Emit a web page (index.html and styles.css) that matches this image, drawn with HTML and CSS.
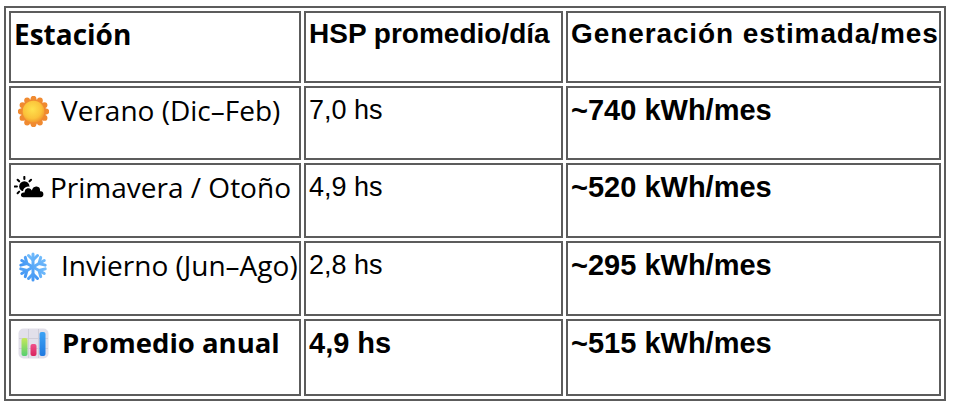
FILE: index.html
```html
<!DOCTYPE html>
<html lang="es">
<head>
<meta charset="utf-8">
<title>Generación solar por estación</title>
<link rel="stylesheet" href="styles.css">
</head>
<body>
<table class="tbl">
  <colgroup>
    <col class="c1"><col class="c2"><col class="c3">
  </colgroup>
  <tr class="r-head">
    <th class="cell lbl">Estación</th>
    <th class="cell">HSP promedio/día</th>
    <th class="cell wide">Generación estimada/mes</th>
  </tr>
  <tr class="r1">
    <td class="cell lbl"><span class="ico ico-sun"><svg viewBox="0 0 32 32" width="31" height="31" aria-hidden="true">
      <defs><radialGradient id="sg" cx="45%" cy="40%" r="60%"><stop offset="0" stop-color="#ffe14d"/><stop offset="0.7" stop-color="#fbc23a"/><stop offset="1" stop-color="#f29a2e"/></radialGradient></defs>
      <g fill="#f08a30">
        <circle cx="16" cy="2.8" r="3"/><circle cx="22.6" cy="4.6" r="3"/><circle cx="27.4" cy="9.4" r="3"/><circle cx="29.2" cy="16" r="3"/><circle cx="27.4" cy="22.6" r="3"/><circle cx="22.6" cy="27.4" r="3"/><circle cx="16" cy="29.2" r="3"/><circle cx="9.4" cy="27.4" r="3"/><circle cx="4.6" cy="22.6" r="3"/><circle cx="2.8" cy="16" r="3"/><circle cx="4.6" cy="9.4" r="3"/><circle cx="9.4" cy="4.6" r="3"/>
        <circle cx="16" cy="16" r="13"/>
      </g>
      <circle cx="16" cy="16" r="11.2" fill="url(#sg)"/>
    </svg></span>Verano (Dic–Feb)</td>
    <td class="cell">7,0 hs</td>
    <td class="cell strong">~740 kWh/mes</td>
  </tr>
  <tr class="r2">
    <td class="cell lbl"><span class="ico ico-cloud"><svg viewBox="0 0 30 22" width="31" height="23" aria-hidden="true">
      <g stroke="#000" stroke-width="2" stroke-linecap="round">
        <line x1="10" y1="0.8" x2="10" y2="2.8"/><line x1="3.5" y1="3.5" x2="5" y2="5"/><line x1="16.5" y1="3.5" x2="15" y2="5"/><line x1="0.8" y1="10" x2="2.8" y2="10"/><line x1="3.5" y1="16.5" x2="5" y2="15"/>
      </g>
      <circle cx="10" cy="10" r="5" fill="#000"/>
      <path d="M9 21.2 C4.8 21.2 4.8 14.8 9.5 15 C9.8 10.6 15 9.8 17 12.3 C18.5 7.6 26.2 8.2 26 13.8 C30.2 13.8 30.4 21.2 26 21.2 Z" fill="#000" stroke="#fff" stroke-width="1.6"/>
    </svg></span>Primavera / Otoño</td>
    <td class="cell">4,9 hs</td>
    <td class="cell strong">~520 kWh/mes</td>
  </tr>
  <tr class="r3">
    <td class="cell lbl"><span class="ico ico-snow"><svg viewBox="0 0 30 30" width="30" height="30" aria-hidden="true">
      <defs><linearGradient id="fg" gradientUnits="userSpaceOnUse" x1="0" y1="0" x2="30" y2="30"><stop offset="0" stop-color="#86ccff"/><stop offset="1" stop-color="#2f86f0"/></linearGradient></defs>
      <g stroke="url(#fg)" stroke-width="3" stroke-linecap="round" stroke-linejoin="round" fill="none">
        <g>
          <line x1="15" y1="2" x2="15" y2="28"/>
          <polyline points="10.5,3.5 15,8 19.5,3.5"/>
          <polyline points="10.5,26.5 15,22 19.5,26.5"/>
        </g>
        <g transform="rotate(60 15 15)">
          <line x1="15" y1="2" x2="15" y2="28"/>
          <polyline points="10.5,3.5 15,8 19.5,3.5"/>
          <polyline points="10.5,26.5 15,22 19.5,26.5"/>
        </g>
        <g transform="rotate(120 15 15)">
          <line x1="15" y1="2" x2="15" y2="28"/>
          <polyline points="10.5,3.5 15,8 19.5,3.5"/>
          <polyline points="10.5,26.5 15,22 19.5,26.5"/>
        </g>
      </g>
    </svg></span>Invierno (Jun–Ago)</td>
    <td class="cell">2,8 hs</td>
    <td class="cell strong">~295 kWh/mes</td>
  </tr>
  <tr class="r4">
    <td class="cell lbl strong-lbl"><span class="ico ico-chart"><svg viewBox="0 0 31 31" width="31" height="31" aria-hidden="true">
      <defs>
        <linearGradient id="gg" x1="0" y1="0" x2="0" y2="1"><stop offset="0" stop-color="#c6e85a"/><stop offset="1" stop-color="#56cf72"/></linearGradient>
        <linearGradient id="pg" x1="0" y1="0" x2="0" y2="1"><stop offset="0" stop-color="#f0508a"/><stop offset="1" stop-color="#d8245e"/></linearGradient>
        <linearGradient id="bg" x1="0" y1="0" x2="0" y2="1"><stop offset="0" stop-color="#3da3f5"/><stop offset="1" stop-color="#1f79e0"/></linearGradient>
      </defs>
      <rect x="0.5" y="0.5" width="30" height="30" rx="5" fill="#e2e0ea"/>
      <g stroke="#cfcdd8" stroke-width="1"><line x1="10.5" y1="1" x2="10.5" y2="30"/><line x1="20.5" y1="1" x2="20.5" y2="30"/><line x1="1" y1="10.5" x2="30" y2="10.5"/><line x1="1" y1="20.5" x2="30" y2="20.5"/></g>
      <rect x="3.5" y="10" width="6" height="18" rx="2" fill="url(#gg)"/>
      <rect x="12.5" y="16" width="6" height="12" rx="2" fill="url(#pg)"/>
      <rect x="21.5" y="4" width="6" height="24" rx="2" fill="url(#bg)"/>
    </svg></span>Promedio anual</td>
    <td class="cell strong">4,9 hs</td>
    <td class="cell strong">~515 kWh/mes</td>
  </tr>
</table>
</body>
</html>
```
FILE: styles.css
```css
html, body {
  margin: 0;
  padding: 0;
  background: #fff;
}
body {
  font-family: "Liberation Sans", Arial, sans-serif;
  color: #000;
}
.tbl {
  margin: 6px 0 0 4px;
  border: 2px solid #5c5c5c;
  border-spacing: 3px;
  table-layout: fixed;
  width: 942px;
}
.c1 { width: 292px; }
.c2 { width: 259px; }
.c3 { width: 375px; }
.cell {
  box-sizing: border-box;
  border: 2px solid #5c5c5c;
  vertical-align: top;
  text-align: left;
  padding: 6px 2px 0 3px;
  font-size: 27px;
  line-height: 32px;
  font-weight: normal;
  white-space: nowrap;
  overflow: hidden;
}
th.cell {
  font-weight: bold;
  font-size: 28px;
  padding-top: 5px;
}
th.wide {
  letter-spacing: 0.9px;
}
.strong {
  font-weight: bold;
  font-size: 29px;
}
.lbl {
  font-family: "Open Sans", "Liberation Sans", sans-serif;
  font-size: 28px;
  letter-spacing: 0;
}
th.lbl {
  font-size: 28px;
}
.strong-lbl {
  font-weight: bold;
  font-size: 27.5px;
}
.r-head .cell { height: 72px; }
.r1 .cell { height: 74px; }
.r2 .cell { height: 75px; }
.r3 .cell { height: 75px; }
.r4 .cell { height: 77px; }
.ico {
  display: inline-block;
  vertical-align: middle;
  position: relative;
}
.ico svg { display: block; }
.ico-sun { margin: -4px 12px 0 4px; }
.ico-cloud { margin: -6px 5px 0 0; }
.ico-snow { margin: -4px 13px 0 4px; }
.ico-chart { margin: -4px 13px 0 4px; }
```
